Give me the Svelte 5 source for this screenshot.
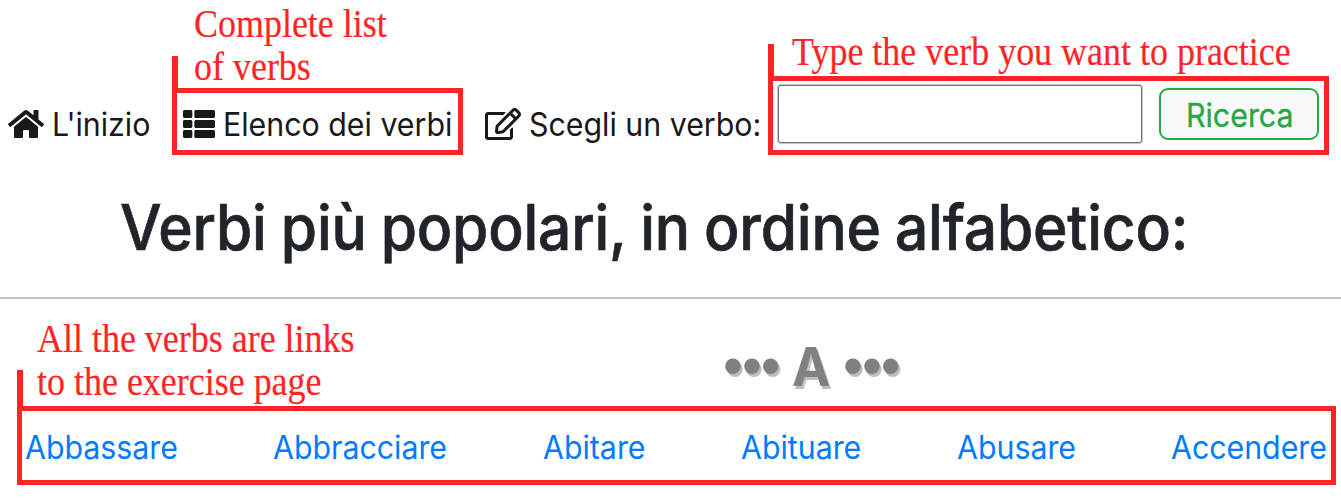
<script>
  const verbs = [
    { name: 'Abbassare', width: 153 },
    { name: 'Abbracciare', width: 174.5 },
    { name: 'Abitare', width: 103 },
    { name: 'Abituare', width: 120.5 },
    { name: 'Abusare', width: 119 },
    { name: 'Accendere', width: 155.5 }
  ];
</script>

<div class="page">
  <nav>
    <a class="item" href="#home">
      <svg width="36" height="32" viewBox="0 0 576 512"><path d="M280.37 148.26L96 300.11V464a16 16 0 0 0 16 16l112.06-.29a16 16 0 0 0 15.92-16V368a16 16 0 0 1 16-16h64a16 16 0 0 1 16 16v95.64a16 16 0 0 0 16 16.05L464 480a16 16 0 0 0 16-16V300L295.67 148.26a12.19 12.19 0 0 0-15.3 0zM571.6 251.47L488 182.56V44.05a12 12 0 0 0-12-12h-56a12 12 0 0 0-12 12v72.61L318.47 43a48 48 0 0 0-61 0L4.34 251.47a12 12 0 0 0-1.6 16.9l25.5 31A12 12 0 0 0 45.15 301l235.22-193.74a12.19 12.19 0 0 1 15.3 0L530.9 301a12 12 0 0 0 16.9-1.6l25.5-31a12 12 0 0 0-1.7-16.93z" /></svg>
      <span>L'inizio</span>
    </a>
    <a class="item" href="#list">
      <svg width="32" height="32" viewBox="0 0 512 512"><path d="M149.333 216v80c0 13.255-10.745 24-24 24H24c-13.255 0-24-10.745-24-24v-80c0-13.255 10.745-24 24-24h101.333c13.255 0 24 10.745 24 24zM0 376v80c0 13.255 10.745 24 24 24h101.333c13.255 0 24-10.745 24-24v-80c0-13.255-10.745-24-24-24H24c-13.255 0-24 10.745-24 24zM125.333 32H24C10.745 32 0 42.745 0 56v80c0 13.255 10.745 24 24 24h101.333c13.255 0 24-10.745 24-24V56c0-13.255-10.745-24-24-24zm80 448H488c13.255 0 24-10.745 24-24v-80c0-13.255-10.745-24-24-24H205.333c-13.255 0-24 10.745-24 24v80c0 13.255 10.745 24 24 24zm-24-424v80c0 13.255 10.745 24 24 24H488c13.255 0 24-10.745 24-24V56c0-13.255-10.745-24-24-24H205.333c-13.255 0-24 10.745-24 24zm24 264H488c13.255 0 24-10.745 24-24v-80c0-13.255-10.745-24-24-24H205.333c-13.255 0-24 10.745-24 24v80c0 13.255 10.745 24 24 24z" /></svg>
      <span>Elenco dei verbi</span>
    </a>
    <label class="item" for="verb">
      <svg width="36" height="32" viewBox="0 0 576 512"><path d="M402.3 344.9l32-32c5-5 13.7-1.5 13.7 5.7V464c0 26.5-21.5 48-48 48H48c-26.5 0-48-21.5-48-48V112c0-26.5 21.5-48 48-48h273.5c7.1 0 10.7 8.6 5.7 13.7l-32 32c-1.5 1.5-3.5 2.3-5.7 2.3H48v352h352V350.5c0-2.1.8-4.1 2.3-5.6zm156.6-201.8L296.3 405.7l-90.4 10c-26.2 2.9-48.5-19.2-45.6-45.6l10-90.4L432.9 17.1c22.9-22.9 59.9-22.9 82.7 0l43.2 43.2c22.9 22.9 22.9 60 .1 82.8zM460.1 174L402 115.9 216.2 301.8l-7.3 65.3 65.3-7.3L460.1 174zm64.8-79.7l-43.2-43.2c-4.1-4.1-10.8-4.1-14.8 0L436 82l58.1 58.1 30.9-30.9c4-4.2 4-10.8-.1-14.9z" /></svg>
      <span>Scegli un verbo:</span>
    </label>
    <input id="verb" type="text" />
    <button type="button"><span>Ricerca</span></button>
  </nav>

  <h1><span>Verbi più popolari, in ordine alfabetico:</span></h1>
  <hr />
  <h2><span class="dots">•••</span><span class="letter">A</span><span class="dots">•••</span></h2>

  <div class="verbs">
    {#each verbs as verb}
      <a href="#{verb.name}" style="width: {verb.width}px"><span>{verb.name}</span></a>
    {/each}
  </div>

  <div class="frame frame-list"></div>
  <p class="note note-list">Complete list<br />of verbs</p>
  <div class="frame frame-search"></div>
  <p class="note note-search">Type the verb you want to practice</p>
  <div class="frame frame-links"></div>
  <p class="note note-links">All the verbs are links<br />to the exercise page</p>
</div>

<style>
  :global(body) {
    margin: 0;
    background: #fff;
  }
  .page {
    position: relative;
    box-sizing: border-box;
    width: 1341px;
    height: 501px;
    overflow: hidden;
    font-family: Inter, sans-serif;
    font-size: 32px;
    color: #212529;
  }
  span {
    display: inline-block;
    white-space: nowrap;
    transform-origin: left center;
  }
  a {
    text-decoration: none;
  }
  nav {
    display: grid;
    grid-template-columns: 175px 302px 293px 381px 160px;
    align-items: start;
    box-sizing: border-box;
    height: 189px;
    padding: 85px 0 0 8px;
  }
  .item {
    display: flex;
    gap: 8px;
    min-width: 0;
    margin-top: 20px;
    line-height: 40px;
    color: #191919;
  }
  .item svg {
    flex: none;
    margin-top: 3px;
    fill: #191919;
  }
  .item span {
    transform: scaleX(0.948);
  }
  input {
    box-sizing: border-box;
    width: 364px;
    height: 58px;
    padding: 0 8px;
    border: 1px solid #767676;
    border-radius: 3px;
    box-shadow: 0 0 0 1px #c6c6c6;
    background: #fff;
    font: inherit;
    outline: none;
  }
  button {
    box-sizing: border-box;
    width: 160px;
    height: 52px;
    margin-top: 3px;
    padding: 2px 0 0 24.5px;
    border: 2px solid #28a745;
    border-radius: 9px;
    background: #f8f9fa;
    color: #28a745;
    font: 400 32px/48px Inter, sans-serif;
    text-align: left;
    -webkit-text-stroke: 0.35px #28a745;
  }
  button span {
    transform: scaleX(0.948);
  }
  h1 {
    height: 76px;
    margin: 0;
    padding-left: 119.5px;
    font-size: 63px;
    font-weight: 500;
    line-height: 76px;
    letter-spacing: -0.2px;
    word-spacing: -1.5px;
    -webkit-text-stroke: 0.7px #212529;
  }
  h1 span {
    transform: scaleX(0.932);
  }
  hr {
    height: 2px;
    margin: 32px 0 0;
    border: 0;
    background: #c3c3c3;
  }
  h2 {
    display: flex;
    height: 64px;
    margin: 34px 0 0 723.5px;
    font-size: 54px;
    font-weight: 700;
    line-height: 64px;
    color: #808080;
    text-shadow: 2px 3px 0 #bdbdbd;
  }
  .dots {
    width: 68px;
    font-family: "Liberation Sans", sans-serif;
  }
  .letter {
    width: 52px;
    padding-top: 2px;
    transform: scaleX(0.95);
  }
  .verbs {
    display: flex;
    justify-content: space-between;
    margin: 31px 14.5px 0 24.5px;
    line-height: 40px;
  }
  .verbs a {
    color: #007bff;
  }
  .verbs span {
    transform: scaleX(0.947);
  }
  .frame {
    position: absolute;
    box-sizing: border-box;
    border: 5px solid #ff2424;
    pointer-events: none;
  }
  .frame::before {
    content: "";
    position: absolute;
    left: -5px;
    bottom: 100%;
    width: 6px;
    background: #ff2424;
  }
  .frame-list {
    left: 172px;
    top: 88px;
    width: 291px;
    height: 67px;
  }
  .frame-list::before {
    height: 37px;
  }
  .frame-search {
    left: 768px;
    top: 76px;
    width: 561px;
    height: 79px;
  }
  .frame-search::before {
    height: 37px;
  }
  .frame-links {
    left: 17px;
    top: 406px;
    width: 1319px;
    height: 79px;
  }
  .frame-links::before {
    height: 41px;
  }
  .note {
    position: absolute;
    margin: 0;
    font: 39px/43px "Liberation Serif", serif;
    color: #ff2424;
    -webkit-text-stroke: 0.2px #ff2424;
    white-space: nowrap;
    transform: scaleX(0.922);
    transform-origin: left top;
  }
  .note-list {
    left: 194px;
    top: 2px;
  }
  .note-search {
    left: 791.5px;
    top: 30px;
  }
  .note-links {
    left: 37px;
    top: 317px;
  }
</style>
